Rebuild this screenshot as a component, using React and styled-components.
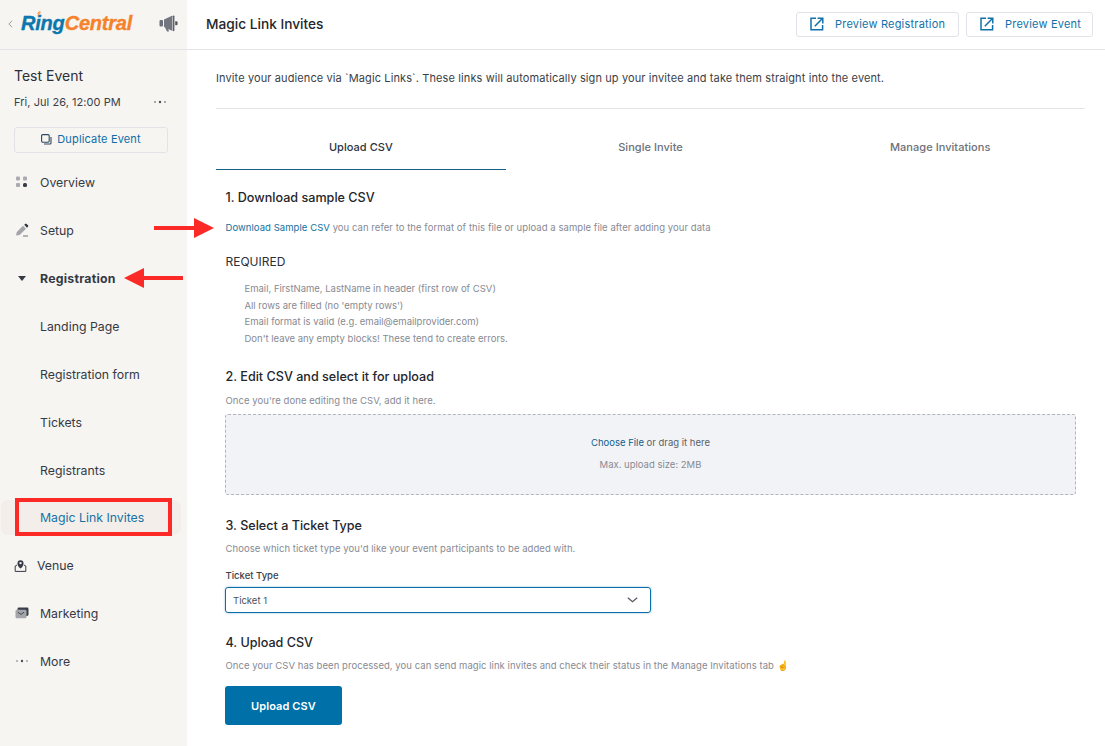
import React from "react";
import styled, { createGlobalStyle } from "styled-components";

const Global = createGlobalStyle`
  html, body { margin: 0; padding: 0; background: #fff; }
  body { font-family: Inter, "Liberation Sans", sans-serif; color: #24262b; overflow: hidden; -webkit-font-smoothing: antialiased; }
  * { box-sizing: border-box; }
`;

const Page = styled.div`
  position: relative;
  display: flex;
  width: 1105px;
  height: 746px;
  overflow: hidden;
`;
const Sidebar = styled.aside`
  flex: 0 0 187px;
  background: #f6f5f2;
  display: flex;
  flex-direction: column;
`;
const LogoBar = styled.div`
  height: 50px;
  border-bottom: 1px solid #e3e5e9;
  display: flex;
  align-items: center;
  padding: 0 8px 2px 8px;
  color: #9a9ca3;
`;
const Logo = styled.div`
  position: relative;
  font: italic 700 20px "Liberation Sans", sans-serif;
  letter-spacing: -0.2px;
  -webkit-text-stroke: 0.35px currentColor;
  margin-left: 8px;
  flex: 1;
  color: #f5822a;
  span { color: #0b77ad; }
`;
const LogoSignal = styled.svg`
  position: absolute;
  left: 16px;
  top: -1px;
`;
const EventBlock = styled.div`
  padding: 17px 20px 0 14px;
`;
const EventName = styled.div`
  font-size: 14px;
  line-height: 18px;
  color: #2b2f38;
`;
const EventDate = styled.div`
  display: flex;
  justify-content: space-between;
  align-items: center;
  margin-top: 8px;
  font-size: 11px;
  letter-spacing: 0.05px;
  line-height: 18px;
  color: #3b3f48;
`;
const Duplicate = styled.div`
  margin: 16px -1px 0 0;
  height: 26px;
  padding-bottom: 2px;
  border: 1px solid #e1e3e8;
  border-radius: 3px;
  display: flex;
  align-items: center;
  justify-content: center;
  gap: 5px;
  font-size: 11px;
  letter-spacing: 0.16px;
  color: #0b6ea8;
`;
const Nav = styled.nav`
  margin-top: 5px;
  display: flex;
  flex-direction: column;
`;
const NavItem = styled.div`
  height: 48px;
  display: flex;
  align-items: center;
  padding-left: ${p => p.$pad || 40}px;
  font-size: 12.3px;
  font-weight: ${p => (p.$bold ? 700 : 400)};
  letter-spacing: ${p => (p.$bold ? "0.25px" : "0")};
  color: #353944;
`;
const IconSlot = styled.span`
  width: 40px;
  margin-left: -40px;
  padding-left: ${p => p.$left || 15}px;
  display: flex;
  align-items: center;
`;
const ActiveItem = styled.div`
  height: 35px;
  margin: 6px 6px 6px 1px;
  padding-left: 39px;
  border-radius: 7px;
  background: #f3eeea;
  display: flex;
  align-items: center;
  font-size: 12.3px;
  color: #1673a6;
`;
const Main = styled.main`
  flex: 1;
  min-width: 0;
  display: flex;
  flex-direction: column;
`;
const Header = styled.header`
  height: 50px;
  flex: none;
  border-bottom: 1px solid #e3e5e9;
  display: flex;
  align-items: center;
  gap: 7px;
  padding: 0 12px 1px 19px;
`;
const Title = styled.h1`
  margin: 0 auto 0 0;
  font-size: 13.7px;
  font-weight: 450;
  color: #24262b;
`;
const PreviewButton = styled.div`
  height: 25px;
  width: ${p => p.$w}px;
  border: 1px solid #e1e3e8;
  border-radius: 3px;
  display: flex;
  align-items: center;
  padding-left: 13px;
  gap: 11px;
  font-size: 11px;
  font-weight: 400;
  letter-spacing: 0.2px;
  color: #1271a8;
`;
const Content = styled.div`
  padding: 0 20px 0 29px;
`;
const Intro = styled.p`
  margin: 0;
  height: 59px;
  padding-top: 20px;
  border-bottom: 1px solid #e3e5e9;
  font-size: 11px;
  letter-spacing: 0.11px;
  line-height: 16px;
  color: #3a3e47;
`;
const Tabs = styled.div`
  display: flex;
`;
const Tab = styled.div`
  width: 290px;
  height: 61px;
  padding-top: 15px;
  display: flex;
  align-items: center;
  justify-content: center;
  font-size: 11px;
  letter-spacing: 0.04px;
  font-weight: 500;
  color: ${p => (p.$active ? "#2f333c" : "#6d717a")};
  border-bottom: 1px solid ${p => (p.$active ? "#1a5f85" : "transparent")};
`;
const Body = styled.div`
  padding: 0 9px 0 9.5px;
`;
const H2 = styled.h2`
  margin: ${p => p.$top}px 0 0;
  font-size: 12.6px;
  line-height: 18px;
  font-weight: 450;
  color: #24262b;
`;
const Small = styled.p`
  margin: ${p => p.$top}px 0 0;
  font-size: 9.5px;
  letter-spacing: 0.055px;
  line-height: 14px;
  color: #878a93;
  a { color: #1271a0; text-decoration: none; }
`;
const Required = styled.div`
  margin-top: 18px;
  font-size: 12px;
  line-height: 18px;
  color: #2b2f38;
`;
const Reqs = styled.ul`
  list-style: none;
  margin: 10px 0 0;
  padding: 0 0 0 19px;
  font-size: 9.5px;
  line-height: 16.6px;
  color: #878a93;
`;
const Drop = styled.div`
  margin: 6px 0 0 -0.5px;
  height: 81px;
  border: 1px dashed #b2b5bc;
  border-radius: 3px;
  background: #f2f3f6;
  display: flex;
  flex-direction: column;
  align-items: center;
  padding-top: 21px;
  font-size: 9.5px;
  line-height: 14px;
  color: #5b5f68;
  a { color: #0f5f8d; }
`;
const DropHint = styled.div`
  margin-top: 8px;
  color: #878a93;
`;
const Label = styled.div`
  margin-top: 13px;
  font-size: 9.5px;
  font-weight: 450;
  line-height: 14px;
  color: #3a3e47;
`;
const Select = styled.div`
  margin: 4px 0 0 -0.5px;
  width: 426px;
  height: 26px;
  border: 1px solid #0b6ea8;
  border-radius: 3px;
  box-shadow: 0 0 2px rgba(11, 110, 168, 0.55);
  display: flex;
  align-items: center;
  justify-content: space-between;
  padding: 0 12px 0 7px;
  font-size: 9.5px;
  color: #4c5059;
`;
const UploadButton = styled.div`
  margin: 13px 0 0 -0.5px;
  width: 117px;
  height: 39px;
  border-radius: 3px;
  background: #0070a8;
  color: #fff;
  font-size: 11px;
  letter-spacing: 0.1px;
  font-weight: 600;
  display: flex;
  align-items: center;
  justify-content: center;
`;
const Overlay = styled.svg`
  position: absolute;
  left: ${p => p.$x}px;
  top: ${p => p.$y}px;
  pointer-events: none;
`;
const RedBox = styled.div`
  position: absolute;
  left: 15px;
  top: 498px;
  width: 157px;
  height: 38px;
  border: 4px solid #fb2a26;
`;

const ExternalIcon = () => (
  <svg width="14" height="14" viewBox="0 0 14 14" fill="none" stroke="#1271a8" strokeWidth="1.5">
    <path d="M6 1.2H1v11.6h11.6V8" />
    <path d="M4.8 9.2 12.2 1.8M7.6 1.2h5.2v5.2" />
  </svg>
);
const CopyIcon = () => (
  <svg width="11" height="11" viewBox="0 0 11 11" fill="none" stroke="#31495e" strokeWidth="1.1">
    <rect x=".6" y=".6" width="7.6" height="7.6" rx="1.2" />
    <path d="M10 3v6a1 1 0 0 1-1 1H3" />
  </svg>
);
const Dots = ({ c = "#8b8e95" }) => (
  <svg width="14" height="4" viewBox="0 0 14 4" fill={c}>
    <circle cx="2" cy="2" r="1" />
    <circle cx="7" cy="2" r="1.2" fill="#4c4f57" />
    <circle cx="12" cy="2" r="1" />
  </svg>
);
const OverviewIcon = () => (
  <svg width="13" height="12" viewBox="0 0 13 12">
    <rect x="1" y="0.5" width="4" height="4" rx="1" fill="#a9abb0" />
    <rect x="8" y="0.5" width="4" height="4" rx="1" fill="#a9abb0" />
    <rect x="1" y="7" width="4" height="4" rx="1" fill="#a9abb0" />
    <rect x="8" y="7" width="4" height="4" rx="1.5" fill="#3a3e48" />
  </svg>
);
const SetupIcon = () => (
  <svg width="14" height="14" viewBox="0 0 14 14">
    <path d="M1 12.5 1.8 9 8 2.8l3 3L4.6 12Z" fill="#a3a5aa" />
    <path d="M9.2 1.8 10.2.9a1 1 0 0 1 1.4 0l1.4 1.4a1 1 0 0 1 0 1.4l-1 1Z" fill="#2f333c" />
    <path d="M8 13h5" stroke="#6d7078" strokeWidth="1" />
  </svg>
);
const Caret = () => (
  <svg width="8" height="5" viewBox="0 0 8 5"><path d="M0 0h8L4 5Z" fill="#353944" /></svg>
);
const VenueIcon = () => (
  <svg width="13" height="13" viewBox="0 0 13 13" fill="none">
    <path d="M3 6 1.2 7v5.4h10.6V7L10 6" stroke="#353944" strokeWidth="1" />
    <path d="M6.5 9.6C4.7 8 3.5 6.6 3.5 4.2a3 3 0 0 1 6 0c0 2.4-1.2 3.8-3 5.4Z" fill="#353944" />
    <circle cx="6.5" cy="4.1" r="1.2" fill="#f6f5f2" />
  </svg>
);
const MarketingIcon = () => (
  <svg width="14" height="12" viewBox="0 0 14 12">
    <rect x="2.5" y="0.5" width="11" height="8.5" rx="1.4" fill="#3a3e48" />
    <rect x="0.5" y="2.8" width="11" height="8.5" rx="1.4" fill="#a3a5aa" />
    <path d="M2.8 5.2 6 7.4l3-2.2" stroke="#3a3e48" strokeWidth=".9" fill="none" />
  </svg>
);
const Megaphone = () => (
  <svg width="20" height="18" viewBox="0 0 20 18">
    <rect x="0.5" y="5" width="3.5" height="6.5" rx="1" fill="#6d7078" />
    <path d="M5 4.6 13 .8v15L5 12Z" fill="#73767e" />
    <rect x="13.6" y="0.4" width="1.8" height="15.8" rx=".9" fill="#5d6068" />
    <path d="M16.2 6.2h1.2a1.2 1.2 0 0 1 1.2 1.2v1.6a1.2 1.2 0 0 1-1.2 1.2h-1.2Z" fill="#55585f" />
    <path d="M6 12.5h3l1 4H8Z" fill="#73767e" />
  </svg>
);
const Chevron = () => (
  <svg width="11" height="6" viewBox="0 0 11 6" fill="none" stroke="#55585f" strokeWidth="1.2"><path d="m.8.8 4.7 4 4.7-4" /></svg>
);
const BackChevron = () => (
  <svg width="5" height="8" viewBox="0 0 5 8" fill="none" stroke="#9a9ca3" strokeWidth="1"><path d="M4 .8.9 4 4 7.2" /></svg>
);
const Arrow = ({ x, y, w, flip }) => (
  <Overlay $x={x} $y={y} width={w} height="22" viewBox={`0 0 ${w} 22`}>
    <g transform={flip ? `translate(${w} 0) scale(-1 1)` : undefined}>
      <path d={`M0 9H${w - 20}V1L${w} 11 ${w - 20} 21V13H0Z`} fill="#fb2a26" />
    </g>
  </Overlay>
);

export default function App() {
  return (
    <Page>
      <Global />
      <Sidebar>
        <LogoBar>
          <BackChevron />
          <Logo>
            <span>Ring</span>Central
            <LogoSignal width="7" height="6" viewBox="0 0 7 6" fill="none" stroke="#f5822a" strokeWidth="1">
              <path d="M1 4.5a2.6 2.6 0 0 1 2.6-2.6M.6 2.4A3.6 3.6 0 0 1 3.4.6" />
            </LogoSignal>
          </Logo>
          <Megaphone />
        </LogoBar>
        <EventBlock>
          <EventName>Test Event</EventName>
          <EventDate>Fri, Jul 26, 12:00 PM <Dots /></EventDate>
          <Duplicate><CopyIcon />Duplicate Event</Duplicate>
        </EventBlock>
        <Nav>
          <NavItem><IconSlot><OverviewIcon /></IconSlot>Overview</NavItem>
          <NavItem><IconSlot><SetupIcon /></IconSlot>Setup</NavItem>
          <NavItem $bold><IconSlot $left={18}><Caret /></IconSlot>Registration</NavItem>
          <NavItem>Landing Page</NavItem>
          <NavItem>Registration form</NavItem>
          <NavItem>Tickets</NavItem>
          <NavItem>Registrants</NavItem>
          <ActiveItem>Magic Link Invites</ActiveItem>
          <NavItem $pad={37}><IconSlot $left={17}><VenueIcon /></IconSlot>Venue</NavItem>
          <NavItem><IconSlot><MarketingIcon /></IconSlot>Marketing</NavItem>
          <NavItem><IconSlot><Dots c="#a3a5aa" /></IconSlot>More</NavItem>
        </Nav>
      </Sidebar>
      <Main>
        <Header>
          <Title>Magic Link Invites</Title>
          <PreviewButton $w={163}><ExternalIcon />Preview Registration</PreviewButton>
          <PreviewButton $w={127}><ExternalIcon />Preview Event</PreviewButton>
        </Header>
        <Content>
          <Intro>Invite your audience via `Magic Links`. These links will automatically sign up your invitee and take them straight into the event.</Intro>
          <Tabs>
            <Tab $active>Upload CSV</Tab>
            <Tab>Single Invite</Tab>
            <Tab>Manage Invitations</Tab>
          </Tabs>
          <Body>
            <H2 $top={19}>1. Download sample CSV</H2>
            <Small $top={14}><a>Download Sample CSV</a> you can refer to the format of this file or upload a sample file after adding your data</Small>
            <Required>REQUIRED</Required>
            <Reqs>
              <li>Email, FirstName, LastName in header (first row of CSV)</li>
              <li>All rows are filled (no 'empty rows')</li>
              <li>Email format is valid (e.g. email@emailprovider.com)</li>
              <li>Don't leave any empty blocks! These tend to create errors.</li>
            </Reqs>
            <H2 $top={21}>2. Edit CSV and select it for upload</H2>
            <Small $top={8}>Once you're done editing the CSV, add it here.</Small>
            <Drop>
              <div><a>Choose File</a> or drag it here</div>
              <DropHint>Max. upload size: 2MB</DropHint>
            </Drop>
            <H2 $top={22}>3. Select a Ticket Type</H2>
            <Small $top={7}>Choose which ticket type you'd like your event participants to be added with.</Small>
            <Label>Ticket Type</Label>
            <Select>Ticket 1<Chevron /></Select>
            <H2 $top={21}>4. Upload CSV</H2>
            <Small $top={7}>Once your CSV has been processed, you can send magic link invites and check their status in the Manage Invitations tab ☝️</Small>
            <UploadButton>Upload CSV</UploadButton>
          </Body>
        </Content>
      </Main>
      <Arrow x={154} y={217} w={60} />
      <Arrow x={124} y={267} w={59} flip />
      <RedBox />
    </Page>
  );
}
